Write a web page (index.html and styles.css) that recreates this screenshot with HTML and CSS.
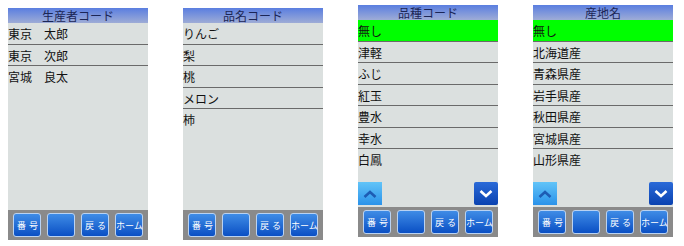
FILE: index.html
```html
<!DOCTYPE html>
<html lang="ja">
<head>
    <meta charset="UTF-8">
    <meta name="viewport" content="width=device-width, initial-scale=1.0">
    <title>コード選択</title>
    <link rel="stylesheet" href="styles.css">
</head>

<body>
    <div class="screens">
        <!-- 生産者 -->
        <div class="phone">
            <div class="title">生産者コード</div>
            <div class="content">
                <ul class="list">
                    <li>東京　太郎</li>
                    <li>東京　次郎</li>
                    <li>宮城　良太</li>
                </ul>
            </div>
            <div class="bar">
                <button class="btn spaced">番号</button>
                <button class="btn"></button>
                <button class="btn spaced">戻る</button>
                <button class="btn">ホーム</button>
            </div>
        </div>

        <!-- 品名 -->
        <div class="phone">
            <div class="title">品名コード</div>
            <div class="content">
                <ul class="list">
                    <li>りんご</li>
                    <li>梨</li>
                    <li>桃</li>
                    <li>メロン</li>
                    <li>柿</li>
                </ul>
            </div>
            <div class="bar">
                <button class="btn spaced">番号</button>
                <button class="btn"></button>
                <button class="btn spaced">戻る</button>
                <button class="btn">ホーム</button>
            </div>
        </div>

        <!-- 品種 -->
        <div class="phone raised">
            <div class="title">品種コード</div>
            <div class="content">
                <ul class="list">
                    <li class="selected">無し</li>
                    <li>津軽</li>
                    <li>ふじ</li>
                    <li>紅玉</li>
                    <li>豊水</li>
                    <li>幸水</li>
                    <li>白鳳</li>
                </ul>
                <div class="pager">
                    <button class="page-btn prev">
                        <svg width="14" height="8" viewBox="0 0 14 8"><polyline points="1.5,7 7,2 12.5,7" fill="none" stroke="#1d5cb4" stroke-width="2.6"/></svg>
                    </button>
                    <button class="page-btn next">
                        <svg width="14" height="8" viewBox="0 0 14 8"><polyline points="1.5,1 7,6 12.5,1" fill="none" stroke="#fff" stroke-width="2.6"/></svg>
                    </button>
                </div>
            </div>
            <div class="bar">
                <button class="btn spaced">番号</button>
                <button class="btn"></button>
                <button class="btn spaced">戻る</button>
                <button class="btn">ホーム</button>
            </div>
        </div>

        <!-- 産地 -->
        <div class="phone raised">
            <div class="title">産地名</div>
            <div class="content">
                <ul class="list">
                    <li class="selected">無し</li>
                    <li>北海道産</li>
                    <li>青森県産</li>
                    <li>岩手県産</li>
                    <li>秋田県産</li>
                    <li>宮城県産</li>
                    <li>山形県産</li>
                </ul>
                <div class="pager">
                    <button class="page-btn prev">
                        <svg width="14" height="8" viewBox="0 0 14 8"><polyline points="1.5,7 7,2 12.5,7" fill="none" stroke="#1d5cb4" stroke-width="2.6"/></svg>
                    </button>
                    <button class="page-btn next">
                        <svg width="14" height="8" viewBox="0 0 14 8"><polyline points="1.5,1 7,6 12.5,1" fill="none" stroke="#fff" stroke-width="2.6"/></svg>
                    </button>
                </div>
            </div>
            <div class="bar">
                <button class="btn spaced">番号</button>
                <button class="btn"></button>
                <button class="btn spaced">戻る</button>
                <button class="btn">ホーム</button>
            </div>
        </div>
    </div>
</body>

</html>
```

FILE: styles.css
```css
body {
    margin: 0;
    background-color: #fff;
    font-family: "Noto Sans CJK JP", "Noto Sans", sans-serif;
}

.screens {
    display: flex;
    align-items: flex-start;
    gap: 35px;
    padding: 8px 0 0 8px;
}

.phone {
    width: 140px;
    height: 232px;
    display: flex;
    flex-direction: column;
    background-color: #dbe0df;
}

.phone.raised {
    margin-top: -3px;
}

.title {
    height: 15px;
    line-height: 15px;
    font-size: 12px;
    text-align: center;
    color: #1b2656;
    background: linear-gradient(#5a7ee0, #9eacd6);
}

.content {
    flex: 1;
    display: flex;
    flex-direction: column;
}

.list {
    list-style: none;
    margin: 0;
    padding: 0;
}

.list li {
    height: 20.5px;
    line-height: 21px;
    font-size: 12px;
    color: #111;
    border-bottom: 1px solid #6a6a6a;
}

.list li:last-child {
    border-bottom: none;
}

.list li.selected {
    background-color: #00ff00;
}

.pager {
    margin-top: auto;
    margin-bottom: 2px;
    display: flex;
    justify-content: space-between;
}

.page-btn {
    width: 24px;
    height: 23px;
    padding: 0;
    border: none;
    display: flex;
    align-items: center;
    justify-content: center;
}

.page-btn.prev {
    background: linear-gradient(#62c4f8, #2a92ea);
}

.page-btn.next {
    border-radius: 2px;
    background: linear-gradient(#2a6ad8, #0a42b0);
}

.bar {
    height: 30px;
    display: flex;
    align-items: center;
    gap: 6px;
    padding-left: 5px;
    background-color: #8a8a8a;
}

.btn {
    width: 28px;
    height: 24px;
    padding: 0;
    box-sizing: border-box;
    border: 1px solid #b9d2f2;
    border-radius: 3px;
    background: linear-gradient(#3f8ce6, #0a4fc4);
    color: #fff;
    font-family: "Noto Sans CJK JP", sans-serif;
    font-size: 9px;
    white-space: nowrap;
}

.btn.spaced {
    letter-spacing: 3px;
    padding-left: 3px;
}
```
